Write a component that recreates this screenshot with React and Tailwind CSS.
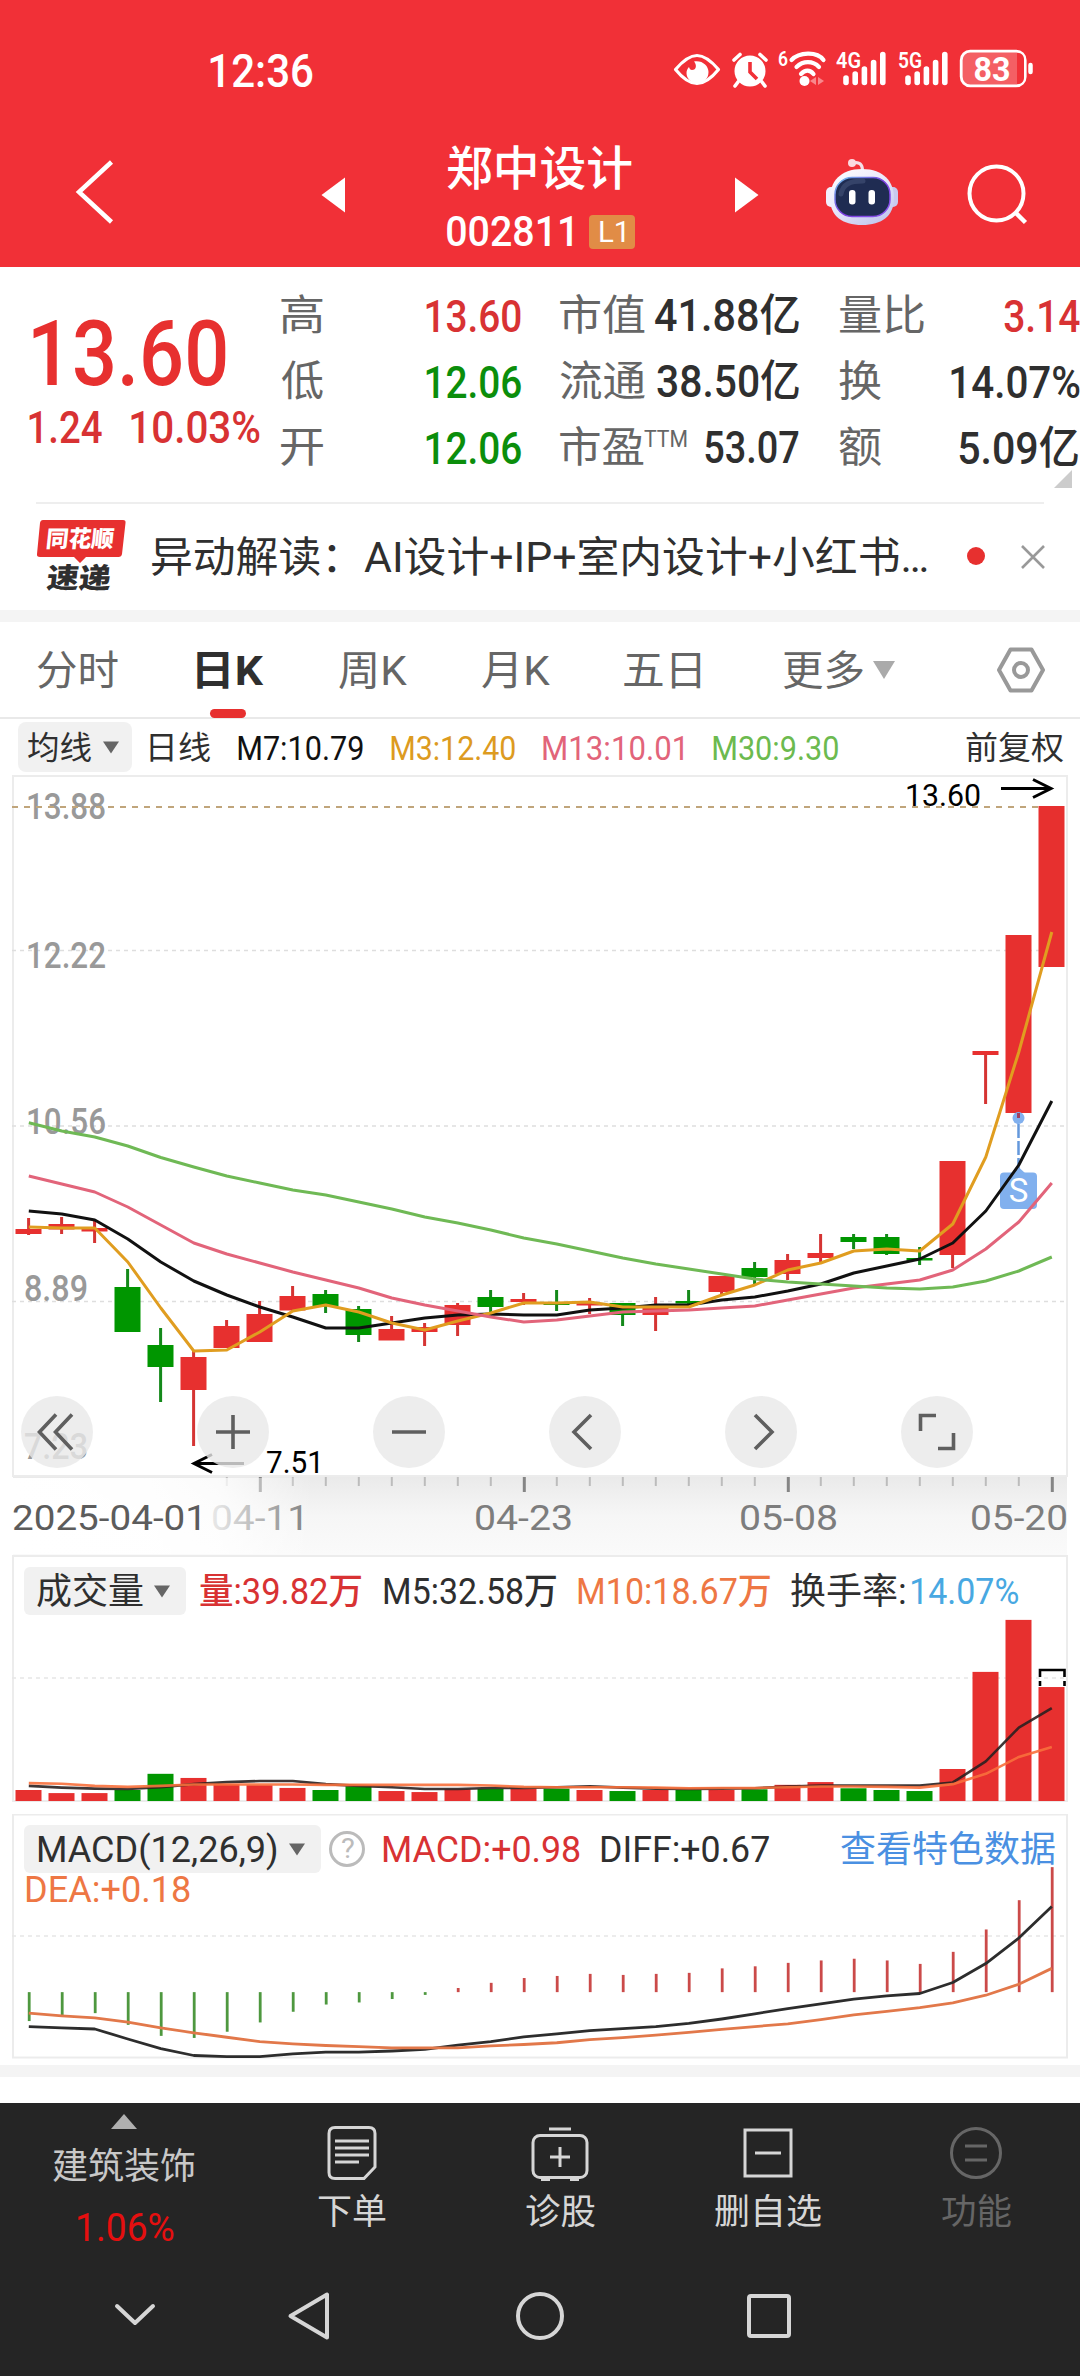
import React, { useLayoutEffect, useRef } from "react";

// Condensed label: scales its text horizontally so the glyphs fill the box width.
function Fit({ className = "", children }) {
  const box = useRef(null);
  const inner = useRef(null);
  useLayoutEffect(() => {
    const cs = getComputedStyle(inner.current);
    const ctx = document.createElement("canvas").getContext("2d");
    ctx.font = `${cs.fontWeight} ${cs.fontSize} ${cs.fontFamily}`;
    const m = ctx.measureText(inner.current.textContent);
    const ink = m.actualBoundingBoxLeft + m.actualBoundingBoxRight;
    const k = box.current.clientWidth / ink;
    inner.current.style.transform = `translateX(${m.actualBoundingBoxLeft * k}px) scaleX(${k})`;
  });
  return (
    <span ref={box} className={"block shrink-0 leading-none whitespace-nowrap " + className}>
      <span ref={inner} className="inline-block origin-left">{children}</span>
    </span>
  );
}

const RED = "#e7302f";
const GREEN = "#009600";
const X0 = 28.8;
const STEP = 33;
const cx = (i) => X0 + STEP * i;
const line = (ys) => ys.map((y, i) => `${cx(i)},${y}`).join(" ");

// [colour, wick top, wick bottom, body top, body bottom]
const candles = [
  ["r", 1218, 1235, 1229, 1234], ["r", 1217, 1234, 1224, 1229.5], ["r", 1220, 1243, 1228, 1231.5],
  ["g", 1269, 1332, 1287, 1332], ["g", 1328, 1402, 1345, 1367], ["r", 1350, 1446, 1357, 1390],
  ["r", 1320, 1348, 1326, 1348], ["r", 1301, 1342, 1314, 1342], ["r", 1286, 1311, 1296, 1310.5],
  ["g", 1290, 1313, 1294, 1306], ["g", 1306, 1342, 1309, 1335], ["r", 1316, 1340, 1329, 1340.5],
  ["r", 1323, 1346, 1327, 1332], ["r", 1303, 1336, 1305, 1325], ["g", 1290, 1312, 1297, 1307],
  ["r", 1293, 1305, 1299, 1302], ["g", 1290, 1311, 1302, 1305], ["r", 1298, 1314, 1303, 1305.5],
  ["g", 1303, 1326, 1303, 1315], ["r", 1297, 1331, 1307.5, 1315], ["g", 1290, 1304, 1301, 1303.5],
  ["r", 1276, 1294, 1276, 1292], ["g", 1262, 1284, 1268, 1277], ["r", 1254, 1280, 1260, 1274],
  ["r", 1234, 1262, 1253, 1258], ["g", 1234, 1249, 1237, 1242], ["g", 1234, 1255, 1237, 1254],
  ["g", 1247, 1265, 1258, 1260.5], ["r", 1161, 1268, 1161, 1255], ["r", 1051, 1104, 1051, 1055],
  ["r", 935, 1118, 935, 1113], ["r", 806, 967, 806, 967],
];
const ma30 = [1122.7, 1131, 1137, 1146, 1157.5, 1167, 1176, 1183, 1190, 1195, 1202, 1209, 1217, 1223, 1230, 1238, 1244, 1251, 1258, 1264, 1269, 1274, 1279, 1282, 1284, 1286, 1288, 1289, 1287, 1281, 1271, 1257];
const ma13 = [1176, 1184, 1192, 1207, 1225, 1243, 1254, 1263, 1272, 1280, 1288, 1298, 1305, 1311, 1317, 1322, 1320, 1316, 1312, 1311, 1310, 1308, 1306, 1300, 1294, 1288, 1284, 1280, 1270, 1249, 1222, 1183];
const ma7 = [1211, 1214, 1220, 1239, 1262, 1281, 1295, 1307, 1317, 1328, 1328, 1323, 1318, 1315, 1314, 1315, 1315, 1310, 1308, 1305, 1305, 1300, 1297, 1291, 1284, 1273, 1266, 1259, 1243, 1211, 1165, 1101];
const ma3 = [1227, 1228, 1228, 1262, 1308, 1351, 1350, 1332, 1311, 1305, 1312, 1323, 1330, 1321, 1313, 1303, 1303, 1302, 1307, 1307, 1307, 1295, 1285, 1270, 1263, 1251, 1249, 1251, 1224, 1157, 1052, 932];

// Indicator panes are stored on a finer grid: 2.904 units per pixel.
const U = 2.904;
const py = (v) => 1540 + v / U;
const volume = [726, 735, 735, 726, 679, 691, 709, 712, 720, 726, 715, 729, 732, 724, 723, 722, 722, 726, 729, 726, 726, 726, 724, 711, 703, 721, 726, 729, 665, 383, 232, 427];
const vol5 = [714, 719, 722, 723, 718, 709, 703, 700, 700, 709, 714, 718, 723, 723, 720, 720, 718, 715, 719, 722, 723, 722, 721, 716, 713, 713, 713, 713, 704, 643, 545, 488];
const vol10 = [706, 708, 714, 717, 714, 710, 710, 710, 710, 711, 711, 711, 711, 711, 713, 717, 718, 718, 718, 719, 721, 720, 720, 718, 716, 716, 717, 719, 709, 679, 630, 601];
const macd = [1397, 1380, 1374, 1408, 1440, 1446, 1428, 1401, 1370, 1349, 1343, 1333, 1321, 1301, 1286, 1272, 1266, 1260, 1263, 1260, 1257, 1244, 1238, 1228, 1221, 1216, 1221, 1231, 1196, 1131, 1046, 950];
const diff = [1413, 1417, 1420, 1449, 1477, 1497, 1500, 1500, 1492, 1487, 1487, 1484, 1479, 1467, 1457, 1443, 1434, 1425, 1419, 1413, 1404, 1391, 1376, 1361, 1347, 1333, 1324, 1317, 1285, 1230, 1156, 1064];
const dea = [1374, 1382, 1388, 1400, 1417, 1431, 1444, 1457, 1463, 1468, 1471, 1475, 1475, 1475, 1469, 1465, 1460, 1451, 1445, 1438, 1430, 1421, 1413, 1405, 1393, 1379, 1369, 1358, 1344, 1322, 1290, 1244];

function Caret({ className = "" }) {
  return (
    <svg className={"shrink-0 " + className} width="18" height="13" viewBox="0 0 18 13">
      <path d="M1 0.5H17L9 12.5Z" fill="currentColor" />
    </svg>
  );
}

function StatusIcons() {
  const bars = (x) => (
    <g stroke="#fff" strokeWidth="5.6" strokeLinecap="round">
      <path d={`M${x} 78V82.5M${x + 9.2} 74V82.5M${x + 18.4} 69V82.5M${x + 27.6} 62.5V82.5M${x + 36.8} 54.5V82.5`} />
    </g>
  );
  return (
    <svg className="shrink-0" width="370" height="60" viewBox="670 40 370 60" fontWeight="600">
      <path d="M675.5 69.5C684 59.5 690 55.5 697 55.5S710 59.5 718.5 69.5C710 80 704 83.5 697 83.5S684 80 675.5 69.5Z" fill="none" stroke="#fff" strokeWidth="3.2" strokeLinejoin="round" />
      <path d="M694 61.5C702 60 708.5 65.5 708.5 72C708.5 79 703.5 83 697.5 83C691 83 686.5 78.5 686.5 73C686.5 70.5 687.5 68.5 689 67C689.5 69 690.5 70 692 70C696.5 70 697 65 694 61.5Z" fill="#fff" />
      <circle cx="750" cy="71" r="15.5" fill="#fff" />
      <path d="M738 82L735 86M762 82L765 86M734 60L740 54.5M766 60L760 54.5" stroke="#fff" strokeWidth="3.6" strokeLinecap="round" />
      <path d="M750 62V72L757 79" stroke="#f13037" strokeWidth="3.6" fill="none" />
      <text x="778" y="66" fontSize="21" fill="#fff" textLength="10" lengthAdjust="spacingAndGlyphs">6</text>
      <g fill="none" stroke="#fff" strokeWidth="4.2" strokeLinecap="round">
        <path d="M791.5 60C799 52 817 51 823.5 60" />
        <path d="M796.5 67C803 60.5 813 60.5 819 67" />
        <path d="M801 74C805 69.5 810 69.5 813.5 74" />
      </g>
      <circle cx="804.5" cy="81" r="5" fill="#fff" />
      <path d="M816 77V85L810 81ZM818 77V85L824 81Z" fill="#f8888c" />
      <text x="836" y="67.5" fontSize="21.5" fill="#fff" textLength="25" lengthAdjust="spacingAndGlyphs">4G</text>
      {bars(846)}
      <text x="898" y="67.5" fontSize="21.5" fill="#fff" textLength="24" lengthAdjust="spacingAndGlyphs">5G</text>
      {bars(908)}
      <rect x="961.2" y="51.2" width="64" height="34.6" rx="9" fill="#f45f64" stroke="#fff" strokeWidth="2.8" />
      <path d="M1017 53H1018C1022 53 1024 56 1024 60V77C1024 81 1022 84 1018 84H1017Z" fill="#f13037" />
      <path d="M1030.5 65V72" stroke="#fff" strokeWidth="4.5" strokeLinecap="round" />
      <text x="973.5" y="80.5" fontSize="33" fontWeight="700" fill="#fff" textLength="37" lengthAdjust="spacingAndGlyphs">83</text>
    </svg>
  );
}

function Robot() {
  return (
    <svg className="shrink-0" width="74" height="70" viewBox="824 158 74 70">
      <defs>
        <linearGradient id="shell" x1="0" y1="0" x2="0.7" y2="1">
          <stop offset="0" stopColor="#fff" />
          <stop offset="0.5" stopColor="#ebe9fa" />
          <stop offset="1" stopColor="#c3c8ee" />
        </linearGradient>
        <linearGradient id="rim" x1="0" y1="0" x2="1" y2="1">
          <stop offset="0" stopColor="#6fc5ea" />
          <stop offset="0.5" stopColor="#7a3be0" />
          <stop offset="1" stopColor="#8c57ee" />
        </linearGradient>
      </defs>
      <path d="M852 163C858 161.5 861.5 164 861.5 171" fill="none" stroke="#f4dfe8" strokeWidth="3.2" />
      <circle cx="851" cy="163" r="4" fill="#fbd9e0" />
      <rect x="825" y="187" width="12" height="20" rx="5" fill="#f2effc" />
      <rect x="885" y="187" width="12" height="20" rx="5" fill="#c9c9ee" />
      <path d="M861 169C883 169 893 182 893 198C893 216 881 225 861 225S829 216 829 198C829 182 839 169 861 169Z" fill="url(#shell)" />
      <rect x="834" y="177.5" width="55" height="39" rx="17" fill="#1f2c52" stroke="url(#rim)" strokeWidth="1.5" />
      <path d="M840 194C842 184 849 181 862 181" fill="none" stroke="#4b5a80" strokeWidth="5" strokeLinecap="round" opacity="0.5" />
      <rect x="848" y="190" width="6.5" height="14.5" rx="3" fill="#fff" />
      <rect x="867.5" y="190" width="6.5" height="14.5" rx="3" fill="#fff" />
    </svg>
  );
}

function Header() {
  return (
    <header className="h-[267px] bg-[#f13037] text-white">
      <div className="flex h-[140px] items-center">
        <Fit className="ml-[210px] w-[103px] pt-[2px] text-[46px] font-medium">12:36</Fit>
        <div className="ml-[357px]"><StatusIcons /></div>
      </div>
      <div className="flex h-[127px] items-start">
        <svg className="mt-[20px] ml-[75px] shrink-0" width="40" height="64" viewBox="0 0 40 64">
          <path d="M36.5 2L4 32L36.5 62" fill="none" stroke="#fff" strokeWidth="4.5" />
        </svg>
        <svg className="mt-[37px] ml-[206px] shrink-0" width="25" height="36" viewBox="0 0 25 36">
          <path d="M24 0.5V35.5L0.5 18Z" fill="#fff" />
        </svg>
        <div className="ml-[101px] w-[188px] shrink-0">
          <Fit className="mt-[5px] w-[185px] text-[47px] font-medium">郑中设计</Fit>
          <div className="mt-[19px] flex items-center">
            <Fit className="w-[125px] text-[42px] font-medium">002811</Fit>
            <div className="ml-[17px] flex h-[34px] w-[48px] items-center justify-center rounded-[4px] bg-[#e18c46]">
              <Fit className="w-[25px] text-[29px]">L1</Fit>
            </div>
          </div>
        </div>
        <svg className="mt-[37px] ml-[100px] shrink-0" width="25" height="36" viewBox="0 0 25 36">
          <path d="M0 0.5V35.5L23.5 18Z" fill="#fff" />
        </svg>
        <div className="mt-[18px] ml-[65px]"><Robot /></div>
        <svg className="mt-[23px] ml-[67px] shrink-0" width="64" height="62" viewBox="0 0 64 62">
          <circle cx="30.5" cy="30.5" r="27" fill="none" stroke="#fff" strokeWidth="4" />
          <path d="M49 49L59.5 59.5" stroke="#fff" strokeWidth="4.5" />
        </svg>
      </div>
    </header>
  );
}

function Quote() {
  const k = "w-[42px] text-[42px] text-[#666]";
  const k2 = "w-[85px] text-[42px] text-[#666]";
  const row = "flex h-[66px] items-center justify-between";
  return (
    <section className="relative flex h-[235px] pt-[16px]">
      <div className="w-[281px] shrink-0 text-[#e7302f]">
        <Fit className="mt-[26px] ml-[33px] w-[193px] text-[91px] font-medium">13.60</Fit>
        <div className="mt-[5px] flex text-[45px] font-medium text-[#d83233]">
          <Fit className="ml-[29px] w-[73px]">1.24</Fit>
          <Fit className="ml-[29px] w-[129px]">10.03%</Fit>
        </div>
      </div>
      <div className="w-[240px] shrink-0 font-medium">
        <div className={row}><Fit className={k + " font-normal"}>高</Fit><Fit className="w-[95px] text-[45px] text-[#d83233]">13.60</Fit></div>
        <div className={row}><Fit className={k + " font-normal"}>低</Fit><Fit className="w-[95px] text-[45px] text-[#0b8e0b]">12.06</Fit></div>
        <div className={row}><Fit className={k + " font-normal"}>开</Fit><Fit className="w-[95px] text-[45px] text-[#0b8e0b]">12.06</Fit></div>
      </div>
      <div className="ml-[39px] w-[239px] shrink-0 font-medium text-[#2f2f2f]">
        <div className={row}><Fit className={k2 + " font-normal"}>市值</Fit><Fit className="w-[144px] text-[44px]">41.88亿</Fit></div>
        <div className={row}><Fit className={k2 + " font-normal"}>流通</Fit><Fit className="w-[142px] text-[44px]">38.50亿</Fit></div>
        <div className={row}>
          <div className="flex font-normal text-[#666]">
            <Fit className="w-[84px] text-[42px]">市盈</Fit>
            <Fit className="mt-[1px] w-[43px] text-[23px]">TTM</Fit>
          </div>
          <Fit className="w-[94px] text-[44px]">53.07</Fit>
        </div>
      </div>
      <div className="ml-[40px] w-[241px] shrink-0 font-medium text-[#2f2f2f]">
        <div className={row}><Fit className={k2 + " font-normal"}>量比</Fit><Fit className="w-[76px] text-[45px] text-[#d83233]">3.14</Fit></div>
        <div className={row}><Fit className={k + " font-normal"}>换</Fit><Fit className="w-[129px] text-[45px]">14.07%</Fit></div>
        <div className={row + " pr-[2px]"}><Fit className={k + " font-normal"}>额</Fit><Fit className="w-[119px] text-[45px]">5.09亿</Fit></div>
      </div>
      <svg className="absolute right-[8px] bottom-[14px]" width="18" height="18" viewBox="0 0 18 18">
        <path d="M18 0V18H0Z" fill="#ccc" />
      </svg>
    </section>
  );
}

function News() {
  return (
    <section className="mx-[36px] flex h-[108px] items-start border-t-2 border-[#eeeeee]">
      <div className="relative mt-[15px] h-[74px] w-[90px] shrink-0">
        <svg className="absolute inset-0" width="90" height="74" viewBox="0 0 90 74">
          <path d="M7 1H87Q90 1 89.5 4L86 35Q85.5 38 82.5 38H50L44 44L38 38H4Q0.5 38 1 35L4 4Q4.5 1 7 1Z" fill={RED} />
        </svg>
        <Fit className="absolute top-[9px] left-[11px] w-[67px] -skew-x-6 text-[23px] font-black text-white">同花顺</Fit>
        <Fit className="absolute top-[46px] left-[11px] w-[64px] -skew-x-6 text-[28px] font-black text-[#2f2f2f]">速递</Fit>
      </div>
      <Fit className="mt-[33px] ml-[26px] w-[775px] text-[42px] text-[#2f2f2f]">异动解读：AI设计+IP+室内设计+小红书…</Fit>
      <div className="mt-[43px] ml-[40px] size-[18px] shrink-0 rounded-full bg-[#e7302f]" />
      <svg className="mt-[40px] ml-[35px] shrink-0" width="26" height="26" viewBox="0 0 26 26">
        <path d="M2 2L24 24M24 2L2 24" stroke="#999" strokeWidth="2.6" />
      </svg>
    </section>
  );
}

function Tabs() {
  return (
    <nav className="flex h-[97px] items-center border-b-2 border-[#e9e9e9] pt-[3px] text-[41px] text-[#666]">
      <Fit className="ml-[37px] w-[81px]">分时</Fit>
      <div className="relative ml-[79px]">
        <Fit className="w-[67px] font-bold text-[#2f2f2f]">日K</Fit>
        <div className="absolute top-[58px] left-[13px] h-[9px] w-[36px] rounded-[5px] bg-[#e7302f]" />
      </div>
      <Fit className="ml-[75px] w-[68px]">周K</Fit>
      <Fit className="ml-[75px] w-[68px]">月K</Fit>
      <Fit className="ml-[74px] w-[77px]">五日</Fit>
      <Fit className="ml-[82px] w-[80px]">更多</Fit>
      <svg className="mt-[-2px] ml-[10px] shrink-0" width="22" height="18" viewBox="0 0 22 18">
        <path d="M0 0H22L11 18Z" fill="#aaa" />
      </svg>
      <svg className="mt-[-3px] ml-[101px] shrink-0" width="50" height="46" viewBox="0 0 50 46">
        <path d="M14.5 2.5H35.5L47 23L35.5 43.5H14.5L3 23Z" fill="none" stroke="#999" strokeWidth="4" strokeLinejoin="round" />
        <circle cx="25" cy="23" r="7" fill="none" stroke="#999" strokeWidth="4" />
      </svg>
    </nav>
  );
}

function Averages() {
  return (
    <div className="flex h-[56px] items-center font-[450]">
      <div className="ml-[18px] flex h-[50px] w-[114px] shrink-0 items-center rounded-[8px] bg-[#f1f1f1] font-normal text-[#2f2f2f]">
        <Fit className="ml-[10px] w-[63px] pt-[2px] text-[32px]">均线</Fit>
        <Caret className="ml-[11px] text-[#666]" />
      </div>
      <Fit className="ml-[18px] w-[60px] pt-[2px] text-[32px] font-normal text-[#2f2f2f]">日线</Fit>
      <Fit className="ml-[28px] w-[125px] pt-[3px] text-[33px] text-[#111]">M7:10.79</Fit>
      <Fit className="ml-[28px] w-[124px] pt-[3px] text-[33px] text-[#dd9b1f]">M3:12.40</Fit>
      <Fit className="ml-[28px] w-[140px] pt-[3px] text-[33px] text-[#e2647a]">M13:10.01</Fit>
      <Fit className="ml-[30px] w-[125px] pt-[3px] text-[33px] text-[#6cba4f]">M30:9.30</Fit>
      <Fit className="ml-[128px] w-[97px] pt-[2px] text-[32px] font-normal text-[#2f2f2f]">前复权</Fit>
    </div>
  );
}

function RoundButton({ children }) {
  return (
    <div className="flex size-[72px] shrink-0 items-center justify-center rounded-full bg-[#e8e8e8]/80">
      <svg width="44" height="44" viewBox="-22 -22 44 44" fill="none" stroke="#5f5f5f" strokeWidth="3.6">{children}</svg>
    </div>
  );
}

function Candles() {
  const majors = [7, 15, 23, 31];
  return (
    <section className="relative h-[780px]">
      <svg className="block" width="1080" height="780" viewBox="0 775 1080 780">
        <defs>
          <linearGradient id="axisV" x1="0" y1="0" x2="0" y2="1">
            <stop offset="0" stopColor="#eaeaea" />
            <stop offset="0.5" stopColor="#f6f6f6" />
            <stop offset="1" stopColor="#fafafa" />
          </linearGradient>
          <linearGradient id="axisH" x1="0" y1="0" x2="1" y2="0">
            <stop offset="0" stopColor="#fff" />
            <stop offset="0.45" stopColor="#fff" stopOpacity="0.95" />
            <stop offset="0.68" stopColor="#fff" stopOpacity="0.8" />
            <stop offset="1" stopColor="#fff" stopOpacity="0" />
          </linearGradient>
        </defs>
        <rect x="13" y="1477" width="1054" height="78" fill="url(#axisV)" />
        <rect x="13" y="776" width="1054" height="700" fill="#fff" stroke="#ececec" strokeWidth="2" />
        <g stroke="#dedede" strokeWidth="1.3" strokeDasharray="4 4">
          <path d="M12 950.5H1066M12 1126H1066M12 1301.5H1066" />
        </g>
        <g fill="#999" fontSize="36" fontWeight="500">
          <text x="26" y="819" textLength="80" lengthAdjust="spacingAndGlyphs">13.88</text>
          <text x="26" y="968" textLength="80" lengthAdjust="spacingAndGlyphs">12.22</text>
          <text x="26" y="1134" textLength="80" lengthAdjust="spacingAndGlyphs">10.56</text>
          <text x="24" y="1301" textLength="64" lengthAdjust="spacingAndGlyphs">8.89</text>
          <text x="24" y="1459" textLength="64" lengthAdjust="spacingAndGlyphs">7.23</text>
        </g>
        <path d="M12 807H1040" stroke="#c0a57b" strokeWidth="2" strokeDasharray="6 6" />
        {candles.map(([c, wt, wb, bt, bb], i) => (
          <g key={i} fill={c === "r" ? RED : GREEN}>
            <rect x={cx(i) - 1.7} y={wt} width="3" height={wb - wt} fill={c === "r" ? "#d53433" : "#14891a"} />
            <rect x={cx(i) - 13.3} y={bt} width="26" height={bb - bt} />
          </g>
        ))}
        <path d="M1018.5 1124V1170" stroke="#6498dc" strokeWidth="2.5" strokeDasharray="14 3" />
        <circle cx="1018.5" cy="1118" r="6" fill="#81b0ee" />
        <path d="M1017 1113H1020V1118H1017Z" fill="#a0405f" />
        <path d="M1012 1174L1018.5 1167L1026 1174Z" fill="#81b0ee" />
        <rect x="1000" y="1172.5" width="37" height="36.5" rx="4" fill="#81b0ee" />
        <text x="1018.6" y="1202" fontSize="33" fill="#fff" textAnchor="middle">S</text>
        <g fill="none" strokeWidth="3" strokeLinejoin="round">
          <polyline points={line(ma7)} stroke="#111" />
          <polyline points={line(ma3)} stroke="#e09d20" />
          <polyline points={line(ma13)} stroke="#e2647a" />
          <polyline points={line(ma30)} stroke="#6fb955" />
        </g>
        <g fill="none" stroke="#000" strokeWidth="3">
          <path d="M1001 788.5H1051M1033 779.5L1051 788.5L1033 797.5" />
          <path d="M244 1463.5H194M212 1454.5L194 1463.5L212 1472.5" />
        </g>
        <g fill="#000" fontSize="31.5">
          <text x="905" y="806" textLength="76" lengthAdjust="spacingAndGlyphs">13.60</text>
          <text x="266" y="1473" textLength="58" lengthAdjust="spacingAndGlyphs">7.51</text>
        </g>
        {candles.map((_, i) => i < 6 ? null : majors.includes(i)
          ? <rect key={i} x={cx(i) - 1} y="1477" width="3" height="15" fill="#858585" />
          : <rect key={i} x={cx(i) - 1} y="1477" width="2" height="9" fill="#bcbcbc" />)}
        <g fill="#7d7d7d" fontSize="35.5" fontWeight="450">
          <text x="211" y="1530" textLength="98" lengthAdjust="spacingAndGlyphs">04-11</text>
          <text x="474" y="1530" textLength="99" lengthAdjust="spacingAndGlyphs">04-23</text>
          <text x="739" y="1530" textLength="99" lengthAdjust="spacingAndGlyphs">05-08</text>
          <text x="970" y="1530" textLength="98" lengthAdjust="spacingAndGlyphs">05-20</text>
        </g>
        <rect x="13" y="1478" width="300" height="76" fill="url(#axisH)" />
        <text x="12" y="1530" fontSize="35.5" fontWeight="450" fill="#5c5c5c" textLength="195" lengthAdjust="spacingAndGlyphs">2025-04-01</text>
      </svg>
      <div className="absolute top-[621px] left-[21px] flex gap-[104px]">
        <RoundButton><path d="M-1 -17.5L-17.5 0L-1 17.5M15 -17.5L-1.5 0L15 17.5" /></RoundButton>
        <RoundButton><path d="M-17 0H17M0 -17V17" /></RoundButton>
        <RoundButton><path d="M-17 0H17" /></RoundButton>
        <RoundButton><path d="M6 -17L-11 0L6 17" /></RoundButton>
        <RoundButton><path d="M-6 -17L11 0L-6 17" /></RoundButton>
        <RoundButton><path d="M-16.5 -1V-16.5H-1M16.5 1V16.5H1" /></RoundButton>
      </div>
    </section>
  );
}

function Volume() {
  return (
    <section className="relative h-[259px]">
      <svg className="absolute inset-0" width="1080" height="259" viewBox="0 1555 1080 259">
        <path d="M13 1801V1556H1067V1801Z" fill="#fff" stroke="#ececec" strokeWidth="2" />
        <path d={`M12 ${py(401)}H1066`} stroke="#e6e6e6" strokeWidth="1.5" strokeDasharray="4 4" />
        {volume.map((v, i) => (
          <rect key={i} x={cx(i) - 13.3} y={py(v)} width="26" height={(758 - v) / U} fill={candles[i][0] === "r" ? RED : GREEN} />
        ))}
        <path d="M1040 1686V1681M1040 1677V1670H1064.5V1677M1064.5 1681V1686" fill="none" stroke="#000" strokeWidth="2.6" />
        <g fill="none" strokeWidth="2.6" strokeLinejoin="round">
          <polyline points={line(vol5.map(py))} stroke="#2a2020" opacity="0.9" />
          <polyline points={line(vol10.map(py))} stroke="#f8703c" opacity="0.9" />
        </g>
      </svg>
      <div className="relative flex items-center pt-[12px] text-[36px] font-[450] text-[#2f2f2f]">
        <div className="ml-[24px] flex h-[48px] w-[162px] shrink-0 items-center rounded-[6px] bg-[#f1f1f1]">
          <Fit className="ml-[13px] w-[106px] pt-[2px] text-[36px] font-normal">成交量</Fit>
          <Caret className="ml-[10px] text-[#666]" />
        </div>
        <Fit className="ml-[14px] w-[161px] pt-[2px] text-[#d83233]">量:39.82万</Fit>
        <Fit className="ml-[23px] w-[172px] pt-[2px]">M5:32.58万</Fit>
        <Fit className="ml-[22px] w-[192px] pt-[2px] text-[#ee7744]">M10:18.67万</Fit>
        <Fit className="ml-[21px] w-[114px] pt-[2px] font-normal">换手率:</Fit>
        <Fit className="ml-[7px] w-[106px] pt-[2px] text-[#48a8e2]">14.07%</Fit>
      </div>
    </section>
  );
}

function Macd() {
  return (
    <section className="relative h-[251px]">
      <svg className="absolute inset-0" width="1080" height="251" viewBox="0 1814 1080 251">
        <rect x="13" y="1814.5" width="1054" height="243" fill="#fff" stroke="#ececec" strokeWidth="2" />
        <path d={`M12 ${py(1150)}H1066`} stroke="#e6e6e6" strokeWidth="1.5" strokeDasharray="4 4" />
        {macd.map((v, i) => {
          const a = Math.min(v, 1313);
          const b = Math.max(v, 1313);
          return <rect key={i} x={cx(i) - 1} y={py(a)} width="2.8" height={(b - a) / U} fill={i < 13 ? "#4e983f" : "#cb4a49"} />;
        })}
        <g fill="none" strokeWidth="2.8" strokeLinejoin="round">
          <polyline points={line(diff.map(py))} stroke="#2d2d2d" />
          <polyline points={line(dea.map(py))} stroke="#e2784a" />
        </g>
      </svg>
      <div className="relative flex items-center pt-[11px] text-[36px] font-[450] text-[#2f2f2f]">
        <div className="ml-[24px] flex h-[48px] w-[297px] shrink-0 items-center rounded-[6px] bg-[#f1f1f1]">
          <Fit className="ml-[14px] w-[238px] pt-[2px] text-[36px]">MACD(12,26,9)</Fit>
          <Caret className="ml-[12px] text-[#666]" />
        </div>
        <div className="ml-[8px] flex size-[36px] shrink-0 items-center justify-center rounded-full border-[3px] border-[#bbb]">
          <Fit className="w-[13px] text-[27px] text-[#bbb]">?</Fit>
        </div>
        <Fit className="ml-[18px] w-[197px] pt-[2px] text-[#d83233]">MACD:+0.98</Fit>
        <Fit className="ml-[21px] w-[168px] pt-[2px]">DIFF:+0.67</Fit>
        <Fit className="ml-[72px] w-[214px] pt-[2px] font-normal text-[#4a90e2]">查看特色数据</Fit>
      </div>
      <Fit className="relative mt-[-1px] ml-[26px] w-[164px] text-[36px] font-[450] text-[#ee7744]">DEA:+0.18</Fit>
    </section>
  );
}

function BottomItem({ icon, label, width, dim }) {
  return (
    <div className={"flex w-[208px] shrink-0 flex-col items-center pt-[21px] " + (dim ? "text-[#666]" : "text-[#d6d6d6]")}>
      <svg width="60" height="58" viewBox="-30 -29 60 58" fill="none" stroke="currentColor" strokeWidth="3">{icon}</svg>
      <Fit className={"mt-[13px] text-[35px] " + width}>{label}</Fit>
    </div>
  );
}

function BottomBar() {
  return (
    <footer className="h-[273px] bg-[#252525]">
      <div className="flex h-[165px]">
        <div className="flex w-[248px] shrink-0 flex-col items-center pt-[11px] text-[#c8c8c8]">
          <svg width="26" height="15" viewBox="0 0 26 15"><path d="M13 0L26 15H0Z" fill="#b0b0b0" /></svg>
          <Fit className="mt-[20px] w-[142px] text-[36px]">建筑装饰</Fit>
          <Fit className="mt-[24px] ml-[3px] w-[96px] text-[38px] text-[#e60f0f]">1.06%</Fit>
        </div>
        <BottomItem width="w-[68px]" label="下单" icon={<>
          <path d="M-17 -25.5H17Q23 -25.5 23 -19.5V14L12 25.5H-17Q-23 25.5 -23 19.5V-19.5Q-23 -25.5 -17 -25.5Z" />
          <path d="M-17 -12H17M-17 -5H17M-17 2H17M-17 9H7" />
        </>} />
        <BottomItem width="w-[69px]" label="诊股" icon={<>
          <rect x="-27" y="-17.5" width="54" height="42" rx="7" />
          <path d="M-11 -24H11M-10 4H10M0 -6V14" />
          <path d="M-19 26H-10M10 26H19" strokeWidth="4" />
        </>} />
        <BottomItem width="w-[106px]" label="删自选" icon={<>
          <rect x="-23" y="-23" width="46" height="46" />
          <path d="M-13 0H13" />
        </>} />
        <BottomItem dim width="w-[69px]" label="功能" icon={<>
          <circle cx="0" cy="0" r="24.5" />
          <path d="M-11 -7H11M-11 7H11" />
        </>} />
      </div>
      <div className="flex h-[96px] items-center">
        <svg className="ml-[114px]" width="42" height="26" viewBox="0 0 42 26">
          <path d="M3 3L21 20L39 3" fill="none" stroke="#d6d6d6" strokeWidth="4" strokeLinecap="round" strokeLinejoin="round" />
        </svg>
        <svg className="ml-[130px]" width="46" height="50" viewBox="0 0 46 50">
          <path d="M41 3.5V46.5L4.5 25Z" fill="none" stroke="#d6d6d6" strokeWidth="4" strokeLinejoin="round" />
        </svg>
        <div className="ml-[184px] size-[48px] rounded-full border-4 border-[#d6d6d6]" />
        <div className="ml-[183px] size-[44px] rounded-[4px] border-4 border-[#d6d6d6]" />
      </div>
    </footer>
  );
}

export default function App() {
  return (
    <main className="w-[1080px] overflow-hidden bg-white font-[Roboto,'Noto_Sans_CJK_SC',sans-serif]">
      <Header />
      <Quote />
      <News />
      <div className="h-[12px] bg-[#f4f4f4]" />
      <Tabs />
      <Averages />
      <Candles />
      <Volume />
      <Macd />
      <div className="h-[12px] bg-[#f4f4f4]" />
      <div className="h-[26px] bg-white" />
      <BottomBar />
    </main>
  );
}
